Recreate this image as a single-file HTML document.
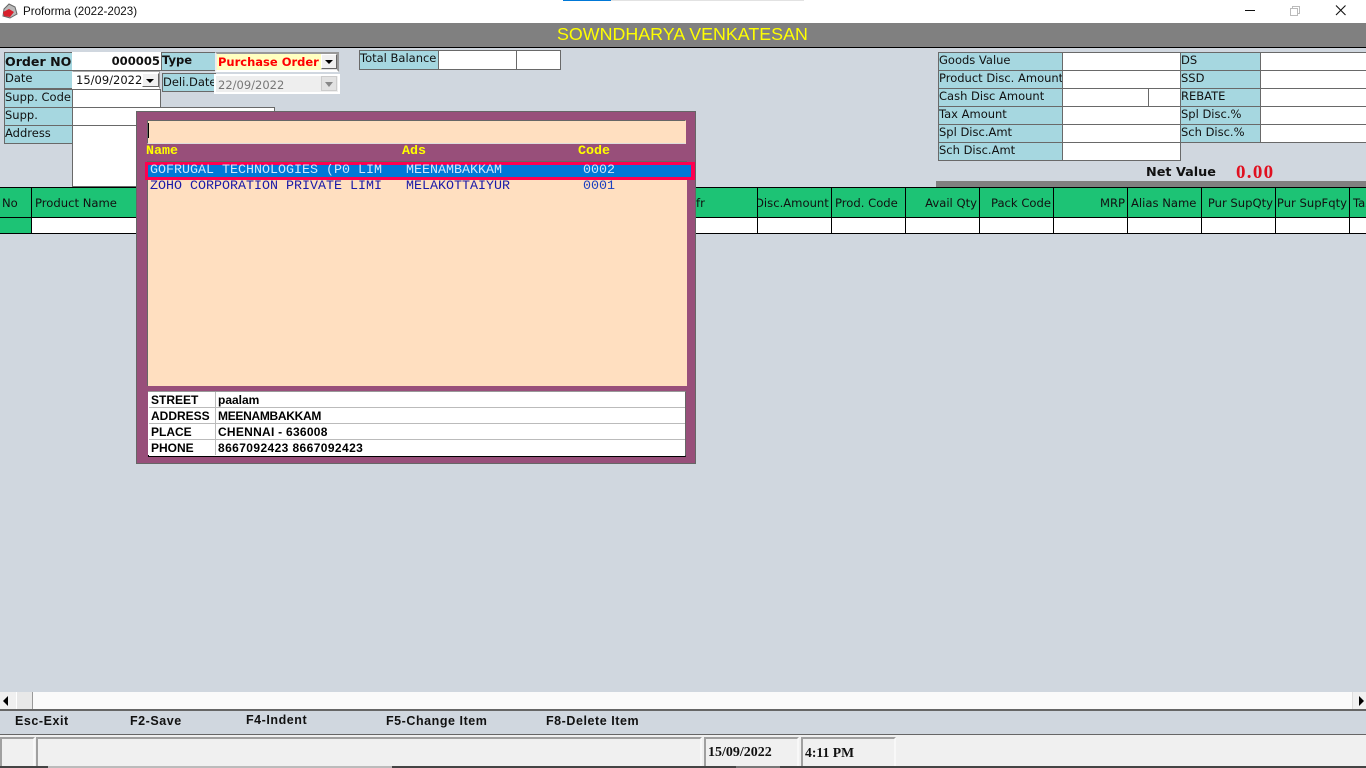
<!DOCTYPE html>
<html lang="en"><head><meta charset="utf-8"><title>Proforma (2022-2023)</title>
<style>
html,body{margin:0;padding:0}
body{width:1366px;height:768px;overflow:hidden;position:relative;background:#d0d7df;font-family:"DejaVu Sans",Verdana,sans-serif;font-size:11.5px;color:#000}
div{position:absolute;box-sizing:border-box;white-space:nowrap;overflow:hidden}
.l{background:#a6d7e0;border:1px solid #696969;padding-left:0;line-height:15px;color:#111}
.v{background:#fff;border:1px solid #696969}
.h{background:#1dc375;border:1px solid #000;height:31px;top:187px;line-height:30px;padding:0 3px;color:#111;font-size:11.6px}
.c{background:#fff;border:1px solid #000;height:17px;top:217px}
.m{font-family:"Liberation Mono",monospace;font-size:13.33px;line-height:14px}
.y{color:#ff0;font-family:"Liberation Mono",monospace;font-weight:bold;font-size:13.33px;top:145px;line-height:14px}
.ft{font-family:"Liberation Sans",sans-serif;font-weight:bold;font-size:12.5px;top:713px;line-height:16px;color:#111;letter-spacing:.55px}
.dr{background:#f0f0f0;border:1px solid #777;border-color:#fff #666 #666 #fff}
.dr:after{content:"";position:absolute;left:3px;top:5px;border:4px solid transparent;border-top:4px solid #000;border-bottom:0}
.p{background:#f0f0f0;border-left:2px solid #a0a0a0;border-top:2px solid #a0a0a0;border-right:2px solid #f8f8f8;top:737px;height:29px}
.r{background:#fff;border-bottom:1px solid #bbb;height:16px;left:149px;width:536px;font-family:"Liberation Sans",sans-serif;font-weight:bold;font-size:12px;line-height:17px;color:#000}
.r span{position:absolute;left:0;top:0}
</style></head><body>
<div style="left:0;top:0;width:1366px;height:23px;background:#fff"></div>
<svg style="position:absolute;left:1px;top:3px" width="17" height="16" viewBox="0 0 17 16"><path d="M3 6 L8 1 L14 4 L16 11 L9 15 L2 13Z" fill="#b9b9b9" stroke="#666"/><path d="M2 9 L8 6 L13 9 L9 14 L3 13Z" fill="#d8202c"/></svg>
<div style="left:23px;top:4px;font-family:'Liberation Sans',sans-serif;font-size:11.6px;line-height:15px;color:#111">Proforma (2022-2023)</div>
<div style="left:563px;top:0;width:48px;height:1px;background:#0078d7"></div>
<div style="left:611px;top:0;width:193px;height:1px;background:#e2e2e2"></div>
<svg style="position:absolute;left:1240px;top:0" width="126" height="23" viewBox="0 0 126 23"><path d="M5 10.5H15" stroke="#111"/><path d="M50.5 8.5h7v7h-7zM52.5 8.5v-2h7v7h-2" fill="none" stroke="#bbb"/><path d="M96 5.5L105.500 15M105.500 5.500L96 15" stroke="#111" stroke-width="1.100"/></svg>

<div style="left:0;top:23px;width:1366px;height:25px;background:#808080;border-bottom:1px solid #000"></div>
<div style="left:557px;top:24px;font-family:'Liberation Sans',sans-serif;font-size:17.85px;line-height:20px;color:#ff0">SOWNDHARYA VENKATESAN</div>

<div class="l" style="left:4px;top:52px;width:69px;height:19px;font-weight:bold;font-size:12.6px;line-height:18px">Order NO</div>
<div class="v" style="left:72px;top:52px;width:90px;height:19px;font-weight:bold;font-size:11.6px;line-height:17px;text-align:right;color:#111;border-top-color:#fff;border-left:0;padding-right:1px">000005</div>
<div class="l" style="left:161px;top:52px;width:55px;height:19px;font-weight:bold;font-size:11.5px;line-height:15px">Type</div>
<div style="left:215px;top:52px;width:124px;height:20px;background:linear-gradient(90deg,#ffffc0 0 104px,#e4e4e4 104px);border:2px solid #e8e8e8;border-color:#999 #999 #fff #eee"></div>
<div style="left:218px;top:55px;font-weight:bold;font-size:11.5px;line-height:15px;color:#f00">Purchase Order</div>
<div class="dr" style="left:321px;top:54px;width:16px;height:15px"></div>
<div class="l" style="left:4px;top:70px;width:69px;height:19px">Date</div>
<div style="left:72px;top:71px;width:88px;height:18px;background:#fff;border:1px solid #888;border-color:#aaa #999 #fff #fff"></div>
<div style="left:76px;top:73px;line-height:15px;color:#111">15/09/2022</div>
<div class="dr" style="left:142px;top:73px;width:17px;height:14px"></div>
<div class="l" style="left:162px;top:73px;width:54px;height:19px;line-height:16px">Deli.Date</div>
<div style="left:214px;top:74px;width:126px;height:20px;background:#eee;border:2px solid #fff"></div>
<div style="left:218px;top:78px;line-height:15px;color:#777">22/09/2022</div>
<div style="left:321px;top:76px;width:16px;height:15px;background:#e2e2e2;border:1px solid #ccc"></div>
<div style="left:325px;top:82px;width:0;height:0;border:4px solid transparent;border-top:5px solid #888;border-bottom:0"></div>
<div class="l" style="left:4px;top:89px;width:69px;height:19px">Supp. Code</div>
<div class="v" style="left:72px;top:89px;width:89px;height:19px"></div>
<div class="l" style="left:4px;top:107px;width:69px;height:19px;white-space:normal;line-height:15px">Supp.<br>Name</div>
<div class="v" style="left:72px;top:107px;width:203px;height:19px"></div>
<div class="l" style="left:4px;top:125px;width:69px;height:19px">Address</div>
<div class="v" style="left:72px;top:125px;width:203px;height:62px"></div>

<div class="l" style="left:359px;top:50px;width:80px;height:20px">Total Balance</div>
<div class="v" style="left:438px;top:50px;width:79px;height:20px"></div>
<div class="v" style="left:516px;top:50px;width:45px;height:20px"></div>

<div class="l" style="left:938px;top:52px;width:125px;height:19px">Goods Value</div><div class="v" style="left:1062px;top:52px;width:119px;height:19px"></div>
<div class="l" style="left:938px;top:70px;width:125px;height:19px">Product Disc. Amount</div><div class="v" style="left:1062px;top:70px;width:119px;height:19px"></div>
<div class="l" style="left:938px;top:88px;width:125px;height:19px">Cash Disc Amount</div><div class="v" style="left:1062px;top:88px;width:87px;height:19px"></div><div class="v" style="left:1148px;top:88px;width:33px;height:19px"></div>
<div class="l" style="left:938px;top:106px;width:125px;height:19px">Tax Amount</div><div class="v" style="left:1062px;top:106px;width:119px;height:19px"></div>
<div class="l" style="left:938px;top:124px;width:125px;height:19px">Spl Disc.Amt</div><div class="v" style="left:1062px;top:124px;width:119px;height:19px"></div>
<div class="l" style="left:938px;top:142px;width:125px;height:19px">Sch Disc.Amt</div><div class="v" style="left:1062px;top:142px;width:119px;height:19px"></div>

<div class="l" style="left:1180px;top:52px;width:81px;height:19px">DS</div><div class="v" style="left:1260px;top:52px;width:110px;height:19px"></div>
<div class="l" style="left:1180px;top:70px;width:81px;height:19px">SSD</div><div class="v" style="left:1260px;top:70px;width:110px;height:19px"></div>
<div class="l" style="left:1180px;top:88px;width:81px;height:19px">REBATE</div><div class="v" style="left:1260px;top:88px;width:110px;height:19px"></div>
<div class="l" style="left:1180px;top:106px;width:81px;height:19px">Spl Disc.%</div><div class="v" style="left:1260px;top:106px;width:110px;height:19px"></div>
<div class="l" style="left:1180px;top:124px;width:81px;height:19px">Sch Disc.%</div><div class="v" style="left:1260px;top:124px;width:110px;height:19px"></div>

<div style="left:1146px;top:164px;font-weight:bold;font-size:12.8px;line-height:17px;color:#111">Net Value</div>
<div style="left:1236px;top:163px;font-family:'Liberation Serif',serif;font-weight:bold;font-size:19px;letter-spacing:1.3px;line-height:19px;color:#e01020">0.00</div>
<div style="left:936px;top:181px;width:430px;height:7px;background:#808080"></div>

<div class="h" style="left:-1px;width:33px;padding-left:2px">No</div>
<div class="h" style="left:31px;width:727px">Product Name</div>
<div class="h" style="left:691px;width:67px;padding-left:5px;border-left:0">fr</div>
<div class="h" style="left:757px;width:75px;padding:0;text-indent:-3px">Disc.Amount</div>
<div class="h" style="left:831px;width:75px">Prod. Code</div>
<div class="h" style="left:905px;width:75px;text-align:right;padding-right:2px">Avail Qty</div>
<div class="h" style="left:979px;width:75px;text-align:right;padding-right:2px">Pack Code</div>
<div class="h" style="left:1053px;width:75px;text-align:right;padding-right:2px">MRP</div>
<div class="h" style="left:1127px;width:75px">Alias Name</div>
<div class="h" style="left:1201px;width:75px;text-align:right;padding-right:2px">Pur SupQty</div>
<div class="h" style="left:1275px;width:75px;text-align:right;padding:0 2px 0 0">Pur SupFqty</div>
<div class="h" style="left:1349px;width:30px">Tax</div>

<div class="c" style="left:-1px;width:33px;background:#1dc375"></div>
<div class="c" style="left:31px;width:727px"></div>
<div class="c" style="left:757px;width:75px"></div>
<div class="c" style="left:831px;width:75px"></div>
<div class="c" style="left:905px;width:75px"></div>
<div class="c" style="left:979px;width:75px"></div>
<div class="c" style="left:1053px;width:75px"></div>
<div class="c" style="left:1127px;width:75px"></div>
<div class="c" style="left:1201px;width:75px"></div>
<div class="c" style="left:1275px;width:75px"></div>
<div class="c" style="left:1349px;width:30px"></div>

<div style="left:136px;top:111px;width:560px;height:353px;background:#984f7a;border:1px solid #666"></div>
<div style="left:147px;top:120px;width:539px;height:24px;background:#ffdfc0;border:1px solid #666;border-right-color:#ffdfc0;border-bottom-color:#ddd"></div>
<div style="left:148px;top:123px;width:1px;height:15px;background:#000"></div>
<div class="y" style="left:146px">Name</div>
<div class="y" style="left:402px">Ads</div>
<div class="y" style="left:578px">Code</div>
<div style="left:147px;top:161px;width:540px;height:225px;background:#ffdfc0;border:1px solid #666;border-width:1px 0 0 1px"></div>
<div style="left:145px;top:162px;width:550px;height:18px;background:#0078d7;border:3px solid #ff0050;border-width:3px 4px 3px 3px"></div>
<div class="m" style="left:150px;top:164px;color:#cfe6fa">GOFRUGAL TECHNOLOGIES (P0 LIM</div>
<div class="m" style="left:406px;top:164px;color:#cfe6fa">MEENAMBAKKAM</div>
<div class="m" style="left:583px;top:164px;color:#cfe6fa">0002</div>
<div class="m" style="left:150px;top:180px;color:#1a1aa8">ZOHO CORPORATION PRIVATE LIMI</div>
<div class="m" style="left:406px;top:180px;color:#1a1aa8">MELAKOTTAIYUR</div>
<div class="m" style="left:583px;top:180px;color:#1a3fc0">0001</div>

<div style="left:148px;top:391px;width:538px;height:66px;background:#fff;border-bottom:2px solid #000;border-right:1px solid #666;border-top:1px solid #999"></div>
<div class="r" style="top:392px"><span style="left:2px">STREET</span><span style="left:69px">paalam</span></div>
<div class="r" style="top:408px"><span style="left:2px">ADDRESS</span><span style="left:69px;letter-spacing:-.3px">MEENAMBAKKAM</span></div>
<div class="r" style="top:424px"><span style="left:2px">PLACE</span><span style="left:69px;letter-spacing:.27px">CHENNAI - 636008</span></div>
<div class="r" style="top:440px;border:0"><span style="left:2px">PHONE</span><span style="left:69px;letter-spacing:.4px">8667092423 8667092423</span></div>
<div style="left:215px;top:392px;width:1px;height:63px;background:#bbb"></div>

<div style="left:0;top:692px;width:1366px;height:17px;background:#fafafa"></div>
<div style="left:0;top:692px;width:16px;height:17px;background:#f0f0f0"></div>
<div style="left:3px;top:696px;width:0;height:0;border:5px solid transparent;border-right:5px solid #000;border-left:0"></div>
<div style="left:16px;top:692px;width:17px;height:17px;background:#e8e8e8;border-right:1px solid #999;border-left:1px solid #fff"></div>
<div style="left:1352px;top:692px;width:14px;height:17px;background:#f0f0f0;border-left:1px solid #ddd"></div>
<div style="left:1359px;top:696px;width:0;height:0;border:5px solid transparent;border-left:5px solid #000;border-right:0"></div>
<div style="left:0;top:709px;width:1366px;height:2px;background:#666"></div>

<div class="ft" style="left:15px">Esc-Exit</div>
<div class="ft" style="left:130px">F2-Save</div>
<div class="ft" style="left:246px;top:712px">F4-Indent</div>
<div class="ft" style="left:386px">F5-Change Item</div>
<div class="ft" style="left:546px">F8-Delete Item</div>

<div style="left:0;top:734px;width:1366px;height:34px;background:#f0f0f0;border-top:1px solid #666"></div>
<div class="p" style="left:0;width:35px"></div>
<div class="p" style="left:36px;width:666px"></div>
<div class="p" style="left:704px;width:95px"></div>
<div class="p" style="left:801px;width:95px"></div>
<div style="left:708px;top:745px;font-family:'Liberation Serif',serif;font-weight:bold;font-size:14px;line-height:16px;color:#111">15/09/2022</div>
<div style="left:805px;top:745px;font-family:'Liberation Serif',serif;font-weight:bold;font-size:13.7px;line-height:16px;color:#111">4:11 PM</div>
<div style="left:0;top:766px;width:1366px;height:2px;background:#444"></div>
<div style="left:48px;top:766px;width:344px;height:2px;background:#bbb"></div>
<div style="left:736px;top:766px;width:44px;height:2px;background:#777"></div>
</body></html>
